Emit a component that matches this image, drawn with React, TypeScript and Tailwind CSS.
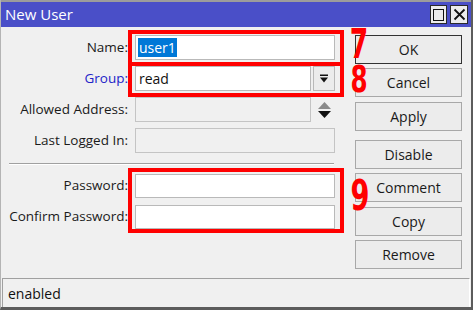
import { ReactNode } from 'react';

const Field = ({ label, blue, children }: { label: string; blue?: boolean; children: ReactNode }) => (
  <div className="flex items-center h-[25px]">
    <div className={`w-[127px] text-right text-[13.5px] leading-none ${blue ? 'text-[#2323c8]' : 'text-[#1a1a1a]'}`}>
      {label}
    </div>
    <div className="ml-[7px] flex items-center h-full">{children}</div>
  </div>
);

const Btn = ({ label, def, className = '' }: { label: string; def?: boolean; className?: string }) => (
  <button
    type="button"
    className={`w-[107px] h-[29px] text-[14px] text-[#1a1a1a] bg-[#ececec] border ${
      def ? 'border-[#333333]' : 'border-[#a8a8a8]'
    } ${className}`}
  >
    {label}
  </button>
);

export default function App() {
  return (
    <div className="w-[473px] h-[310px] bg-[#f0f0f0] flex flex-col relative overflow-hidden border-r-2 border-b-[3px] border-l border-[#5c5c5c] border-l-[#b4b4b4] font-['Open_Sans',sans-serif]">
      <div className="h-[2px] bg-[#9c9c9c]" />

      {/* title bar */}
      <div className="h-[25px] bg-[#4a4fc8] flex items-center pl-[4px] pr-[3px]">
        <span className="text-white text-[15px] leading-none">New User</span>
        <div className="ml-auto flex gap-[3px]">
          <div className="w-[17px] h-[19px] bg-[#ececec] border border-[#2a2a2a] flex items-center justify-center">
            <div className="w-[11px] h-[12px] border-[1.5px] border-[#111]" />
          </div>
          <div className="w-[18px] h-[19px] bg-[#ececec] border border-[#2a2a2a] flex items-center justify-center">
            <svg width="13" height="13" viewBox="0 0 13 13">
              <path d="M1.5 1.5 L11.5 11.5 M11.5 1.5 L1.5 11.5" stroke="#111" strokeWidth="1.8" />
            </svg>
          </div>
        </div>
      </div>

      <div className="flex flex-1">
        {/* form */}
        <div className="w-[342px] pt-[8px] flex flex-col gap-[6px]">
          <Field label="Name:">
            <div className="w-[200px] h-[25px] bg-white border border-[#b9b9b9] flex items-center px-[2px]">
              <span className="bg-[#0078d7] text-white text-[14px] leading-[19px] px-[1px]">user1</span>
            </div>
          </Field>
          <Field label="Group:" blue>
            <div className="w-[176px] h-[25px] bg-white border border-[#b9b9b9] flex items-center px-[3px] text-[14px] text-[#111]">
              read
            </div>
            <div className="ml-[2px] w-[22px] h-[25px] bg-[#ececec] border border-[#b9b9b9] flex items-center justify-center">
              <svg width="10" height="10" viewBox="0 0 10 10">
                <rect x="1" y="0.5" width="8" height="1.5" fill="#111" />
                <path d="M1 3.5 H9 L5 8.5 Z" fill="#111" />
              </svg>
            </div>
          </Field>
          <Field label="Allowed Address:">
            <div className="w-[176px] h-[25px] bg-[#f0f0f0] border border-[#c4c4c4]" />
            <div className="ml-[7px] flex flex-col gap-[2px]">
              <svg width="13" height="7" viewBox="0 0 13 7">
                <path d="M0 7 L6.5 0 L13 7 Z" fill="#8a8a8a" />
              </svg>
              <svg width="13" height="7" viewBox="0 0 13 7">
                <path d="M0 0 L13 0 L6.5 7 Z" fill="#111" />
              </svg>
            </div>
          </Field>
          <Field label="Last Logged In:">
            <div className="w-[200px] h-[25px] bg-[#f0f0f0] border border-[#c4c4c4]" />
          </Field>

          <div className="mt-[4px] ml-[8px] w-[325px] border-t border-[#a0a0a0] border-b border-b-white" />

          <div className="mt-[2px] flex flex-col gap-[6px]">
            <Field label="Password:">
              <div className="w-[200px] h-[24px] bg-white border border-[#b9b9b9]" />
            </Field>
            <Field label="Confirm Password:">
              <div className="w-[200px] h-[24px] bg-white border border-[#b9b9b9]" />
            </Field>
          </div>
        </div>

        {/* buttons */}
        <div className="ml-[12px] pt-[8px] flex flex-col">
          <Btn label="OK" def />
          <Btn label="Cancel" className="mt-[4px]" />
          <Btn label="Apply" className="mt-[5px]" />
          <Btn label="Disable" className="mt-[9px]" />
          <Btn label="Comment" className="mt-[4px]" />
          <Btn label="Copy" className="mt-[5px]" />
          <Btn label="Remove" className="mt-[4px]" />
        </div>
      </div>

      {/* status bar */}
      <div className="h-[29px] px-[1px]">
        <div className="h-full border-t border-l border-[#a0a0a0] border-r border-r-white flex items-center pl-[5px] text-[14px] text-[#111]">
          enabled
        </div>
      </div>

      {/* red annotations */}
      <div className="absolute left-[127px] top-[30px] w-[216px] h-[36px] border-[4px] border-[#ff0000]" />
      <div className="absolute left-[127px] top-[62px] w-[216px] h-[35px] border-[4px] border-[#ff0000]" />
      <div className="absolute left-[127px] top-[168px] w-[216px] h-[65px] border-[4px] border-[#ff0000]" />
      <div className="absolute left-[343px] top-[24px] w-[30px] text-center text-[#ff0000] font-['DejaVu_Sans_Condensed',sans-serif] font-bold text-[41px] leading-none scale-x-[0.72]">
        7
      </div>
      <div className="absolute left-[343px] top-[60px] w-[30px] text-center text-[#ff0000] font-['DejaVu_Sans_Condensed',sans-serif] font-bold text-[38px] leading-none scale-x-[0.72]">
        8
      </div>
      <div className="absolute left-[344px] top-[175px] w-[30px] text-center text-[#ff0000] font-['DejaVu_Sans_Condensed',sans-serif] font-bold text-[42px] leading-none scale-x-[0.72]">
        9
      </div>
    </div>
  );
}
